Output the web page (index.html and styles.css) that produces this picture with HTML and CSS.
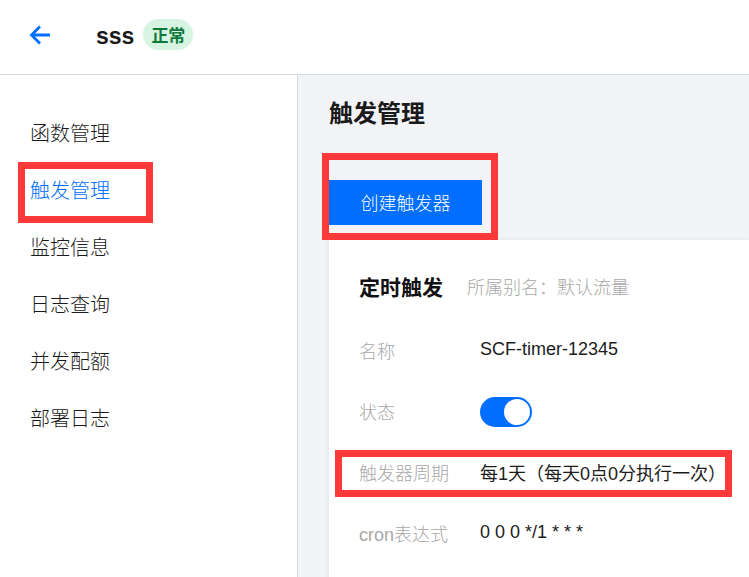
FILE: index.html
```html
<!DOCTYPE html>
<html lang="zh-CN">
<head>
<meta charset="utf-8">
<title>sss - 触发管理</title>
<link rel="stylesheet" href="styles.css">
</head>
<body>
<header class="topbar">
  <svg class="back" width="22" height="22" viewBox="0 0 22 22" aria-hidden="true">
    <path d="M21 11H3 M11 2.5L2.5 11L11 19.5" fill="none" stroke="#006eff" stroke-width="2.8" stroke-linecap="butt" stroke-linejoin="miter"/>
  </svg>
  <span class="fname">sss</span>
  <span class="badge">正常</span>
</header>
<div class="body">
  <nav class="sidebar">
    <div class="menu-item">函数管理</div>
    <div class="menu-item active">触发管理<span class="mark mark-menu"></span></div>
    <div class="menu-item">监控信息</div>
    <div class="menu-item">日志查询</div>
    <div class="menu-item">并发配额</div>
    <div class="menu-item">部署日志</div>
  </nav>
  <main class="main">
    <h1 class="title">触发管理</h1>
    <div class="btn-wrap">
      <button class="btn-primary">创建触发器</button>
      <span class="mark mark-btn"></span>
    </div>
    <section class="card">
      <div class="card-head">
        <span class="card-title">定时触发</span>
        <span class="card-sub">所属别名：默认流量</span>
      </div>
      <div class="row">
        <span class="label">名称</span>
        <span class="value">SCF-timer-12345</span>
      </div>
      <div class="row">
        <span class="label">状态</span>
        <span class="switch"><span class="knob"></span></span>
      </div>
      <div class="row">
        <span class="label">触发器周期</span>
        <span class="value">每1天（每天0点0分执行一次）</span>
        <span class="mark mark-row"></span>
      </div>
      <div class="row">
        <span class="label">cron表达式</span>
        <span class="value">0 0 0 */1 * * *</span>
      </div>
    </section>
  </main>
</div>
</body>
</html>
```

FILE: styles.css
```css
* { box-sizing: border-box; }
html, body {
  margin: 0;
  padding: 0;
  width: 749px;
  height: 577px;
  overflow: hidden;
  background: #ffffff;
  font-family: "Liberation Sans", "Noto Sans CJK SC", sans-serif;
  color: #1a1a1a;
}

.topbar {
  height: 75px;
  border-bottom: 1px solid #d3d8e3;
  display: flex;
  align-items: center;
  padding-left: 29px;
  padding-bottom: 5px;
}
.back { display: block; }
.fname {
  margin-left: 45px;
  font-size: 23px;
  font-weight: 700;
  color: #1a1a1a;
  line-height: 30px;
  position: relative;
  top: 1px;
}
.badge {
  margin-left: 9px;
  height: 31px;
  width: 50px;
  border-radius: 16px;
  background: #d6f4e1;
  color: #10793c;
  font-family: "Noto Sans CJK SC", sans-serif;
  font-weight: 700;
  font-size: 17px;
  display: flex;
  align-items: center;
  justify-content: center;
  line-height: 1;
}

.body {
  display: flex;
  height: 502px;
}
.sidebar {
  width: 298px;
  border-right: 1px solid #d3d8e3;
  padding-top: 29px;
  flex-shrink: 0;
}
.menu-item {
  position: relative;
  height: 57px;
  line-height: 57px;
  padding-left: 30px;
  font-family: "Noto Sans CJK SC", sans-serif;
  font-size: 20px;
  font-weight: 300;
  color: #1a1a1a;
}
.menu-item.active { color: #006eff; }

.mark {
  position: absolute;
  border: 7px solid #fc3a3a;
  pointer-events: none;
}
.mark-menu {
  left: 18px;
  top: 1px;
  width: 135px;
  height: 61px;
}

.main {
  flex: 1;
  background: #f2f3f7;
  padding-left: 31px;
  padding-top: 22px;
  overflow: hidden;
}
.title {
  margin: 0;
  font-family: "Noto Sans CJK SC", sans-serif;
  font-size: 24px;
  font-weight: 700;
  line-height: 30px;
  color: #1a1a1a;
}
.btn-wrap {
  position: relative;
  margin-top: 53px;
  height: 45px;
}
.btn-primary {
  display: block;
  width: 153px;
  height: 45px;
  border: 0;
  margin: 0;
  padding: 0;
  background: #006eff;
  color: #ffffff;
  font-family: "Noto Sans CJK SC", sans-serif;
  font-size: 18px;
  font-weight: 300;
  line-height: 45px;
}
.mark-btn {
  left: -7px;
  top: -27px;
  width: 176px;
  height: 87px;
}

.card {
  margin-top: 15px;
  background: #ffffff;
  box-shadow: -1px 0 4px rgba(40, 50, 80, 0.08);
  padding: 32px 0 0 30px;
  height: 400px;
}
.card-head {
  display: flex;
  align-items: center;
  height: 28px;
  margin-bottom: 19px;
}
.card-title {
  font-family: "Noto Sans CJK SC", sans-serif;
  font-size: 21px;
  font-weight: 700;
  color: #111111;
}
.card-sub {
  margin-left: 24px;
  font-family: "Noto Sans CJK SC", sans-serif;
  font-size: 18px;
  font-weight: 300;
  color: #a8a8a8;
}
.row {
  position: relative;
  display: flex;
  align-items: center;
  height: 61px;
}
.label {
  width: 121px;
  flex-shrink: 0;
  font-size: 18px;
  font-weight: 300;
  color: #a8a8a8;
}
.value {
  font-size: 18px;
  color: #1c1c1c;
  white-space: nowrap;
}
.switch {
  position: relative;
  width: 52px;
  height: 30px;
  border-radius: 15px;
  background: #006eff;
  margin-top: 2px;
}
.knob {
  position: absolute;
  right: 2px;
  top: 2px;
  width: 26px;
  height: 26px;
  border-radius: 50%;
  background: #ffffff;
}
.mark-row {
  left: -24px;
  top: 9px;
  width: 397px;
  height: 47px;
}
```
